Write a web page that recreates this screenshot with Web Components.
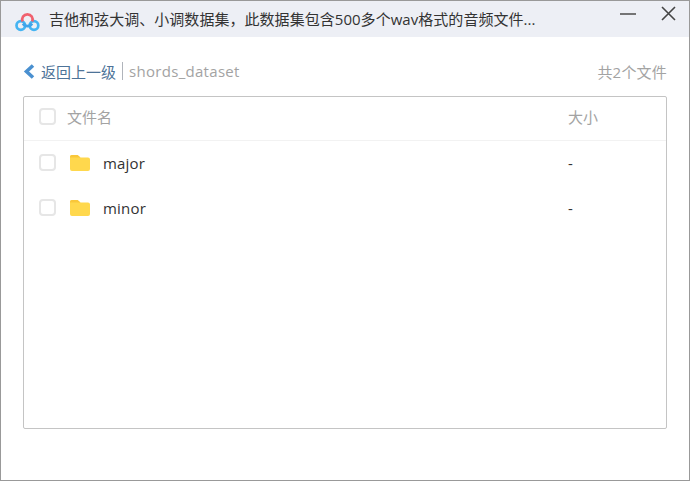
<!DOCTYPE html>
<html lang="zh"><head><meta charset="utf-8">
<style>
html,body{margin:0;padding:0;background:#fff}
body{font-family:"Open Sans","Noto Sans CJK SC",sans-serif}
</style></head><body>
<app-window>
<title-bar slot="bar">吉他和弦大调、小调数据集，此数据集包含500多个wav格式的音频文件...</title-bar>
<crumb-bar back="返回上一级" path="shords_dataset" count="共2个文件"></crumb-bar>
<file-table>
<file-row name="major" size="-"></file-row>
<file-row name="minor" size="-"></file-row>
</file-table>
</app-window>
<script>
const def=(n,html)=>customElements.define(n,class extends HTMLElement{
 connectedCallback(){ if(this.shadowRoot)return; const s=this.attachShadow({mode:'open'});
  s.innerHTML=html(this);}
});
def('app-window',()=>`<style>:host{display:flex;flex-direction:column;box-sizing:border-box;width:690px;height:481px;border:1px solid #999;background:#fff;overflow:hidden}</style><slot name="bar"></slot><slot></slot>`);
def('title-bar',()=>`<style>
:host{display:flex;align-items:center;flex:none;height:36px;background:#edeff5;color:#333;font-size:15px;letter-spacing:.04px;padding-left:13px;box-sizing:border-box}
.t{margin-left:9px;white-space:nowrap;position:relative;top:-1px}
.logo{flex:none;width:26px;height:30px}
.btns{margin-left:auto;display:flex;align-items:flex-start;gap:24px;padding-right:13px;align-self:stretch}
svg{display:block}
</style>
<svg class="logo" viewBox="0 0 26 30"><g fill="none" stroke-width="2.700">
<circle cx="6.800" cy="21.500" r="4.300" stroke="#45b4f2"/><circle cx="20" cy="21.500" r="4.300" stroke="#45b4f2"/><path d="M9 19.500a5.200 5.200 0 0 0 9 0" stroke="#3fa4ea"/><path d="M8.600 17.500a5.200 5.200 0 1 1 9.600 0" stroke="#f0616e"/></g></svg>
<span class="t"><slot></slot></span>
<span class="btns">
<svg width="16" height="16" viewBox="0 0 16 16" style="margin-top:5px"><path d="M0 8H16" stroke="#555" stroke-width="1.600"/></svg>
<svg width="16" height="16" viewBox="0 0 16 16" style="margin-top:5px"><path d="M2 1L15 14M15 1L2 14" stroke="#444" stroke-width="1.600"/></svg>
</span>`);
def('crumb-bar',h=>`<style>
:host{display:flex;align-items:center;flex:none;height:20px;margin:24px 22px 0 22px;font-size:15px;color:#a3a3a3}
svg{display:block;flex:none;margin-right:5px}
.b{color:#4d7398}
.sep{width:1px;height:18px;background:#b0b4bb;margin:0 6px;flex:none}
.p{letter-spacing:.3px}
.c{margin-left:auto;color:#a3a3a3;letter-spacing:.2px}
</style>
<svg width="13" height="15" viewBox="0 0 13 15"><path d="M10 1.500L3.500 7.500l6.500 6" fill="none" stroke="#4a90d0" stroke-width="3.600"/></svg>
<span class="b">${h.getAttribute('back')}</span><span class="sep"></span><span class="p">${h.getAttribute('path')}</span><span class="c">${h.getAttribute('count')}</span>`);
const box=`<span class="cb"></span>`;
const boxCss=`.cb{box-sizing:border-box;width:17px;height:17px;border:2px solid #e6e6e6;border-radius:4px;background:#fff;flex:none}`;
def('file-table',()=>`<style>
:host{display:flex;flex-direction:column;flex:none;box-sizing:border-box;height:333px;margin:15px 22px 0 22px;border:1px solid #c4c4c4;border-radius:2px}
.h{display:flex;align-items:center;box-sizing:border-box;height:44px;padding-bottom:4px;border-bottom:1px solid #f2f2f2;padding-left:15px;font-size:15px;color:#a3a3a3;flex:none}
.h .n{margin-left:11px;flex:1}
.h .s{width:98px}
${boxCss}
</style>
<div class="h">${box}<span class="n">文件名</span><span class="s">大小</span></div>
<div><slot></slot></div>`);
def('file-row',h=>`<style>
:host{display:flex;align-items:center;box-sizing:border-box;height:45px;padding-left:15px;padding-bottom:2px;font-size:15px;color:#333}
${boxCss}
svg{display:block;flex:none;margin:0 13px 0 14px}
.n{flex:1;letter-spacing:.2px}
.s{width:98px}
</style>
${box}<svg width="20" height="16" viewBox="0 0 20 16"><path d="M0 2a2 2 0 0 1 2-2h5.500l3 2.500H18a2 2 0 0 1 2 2V14a2 2 0 0 1-2 2H2a2 2 0 0 1-2-2z" fill="#ffd84d"/><path d="M0 2a2 2 0 0 1 2-2h5.500l3 2.500H0z" fill="#f9c73a"/></svg>
<span class="n">${h.getAttribute('name')}</span><span class="s">${h.getAttribute('size')}</span>`);
</script>
</body></html>
